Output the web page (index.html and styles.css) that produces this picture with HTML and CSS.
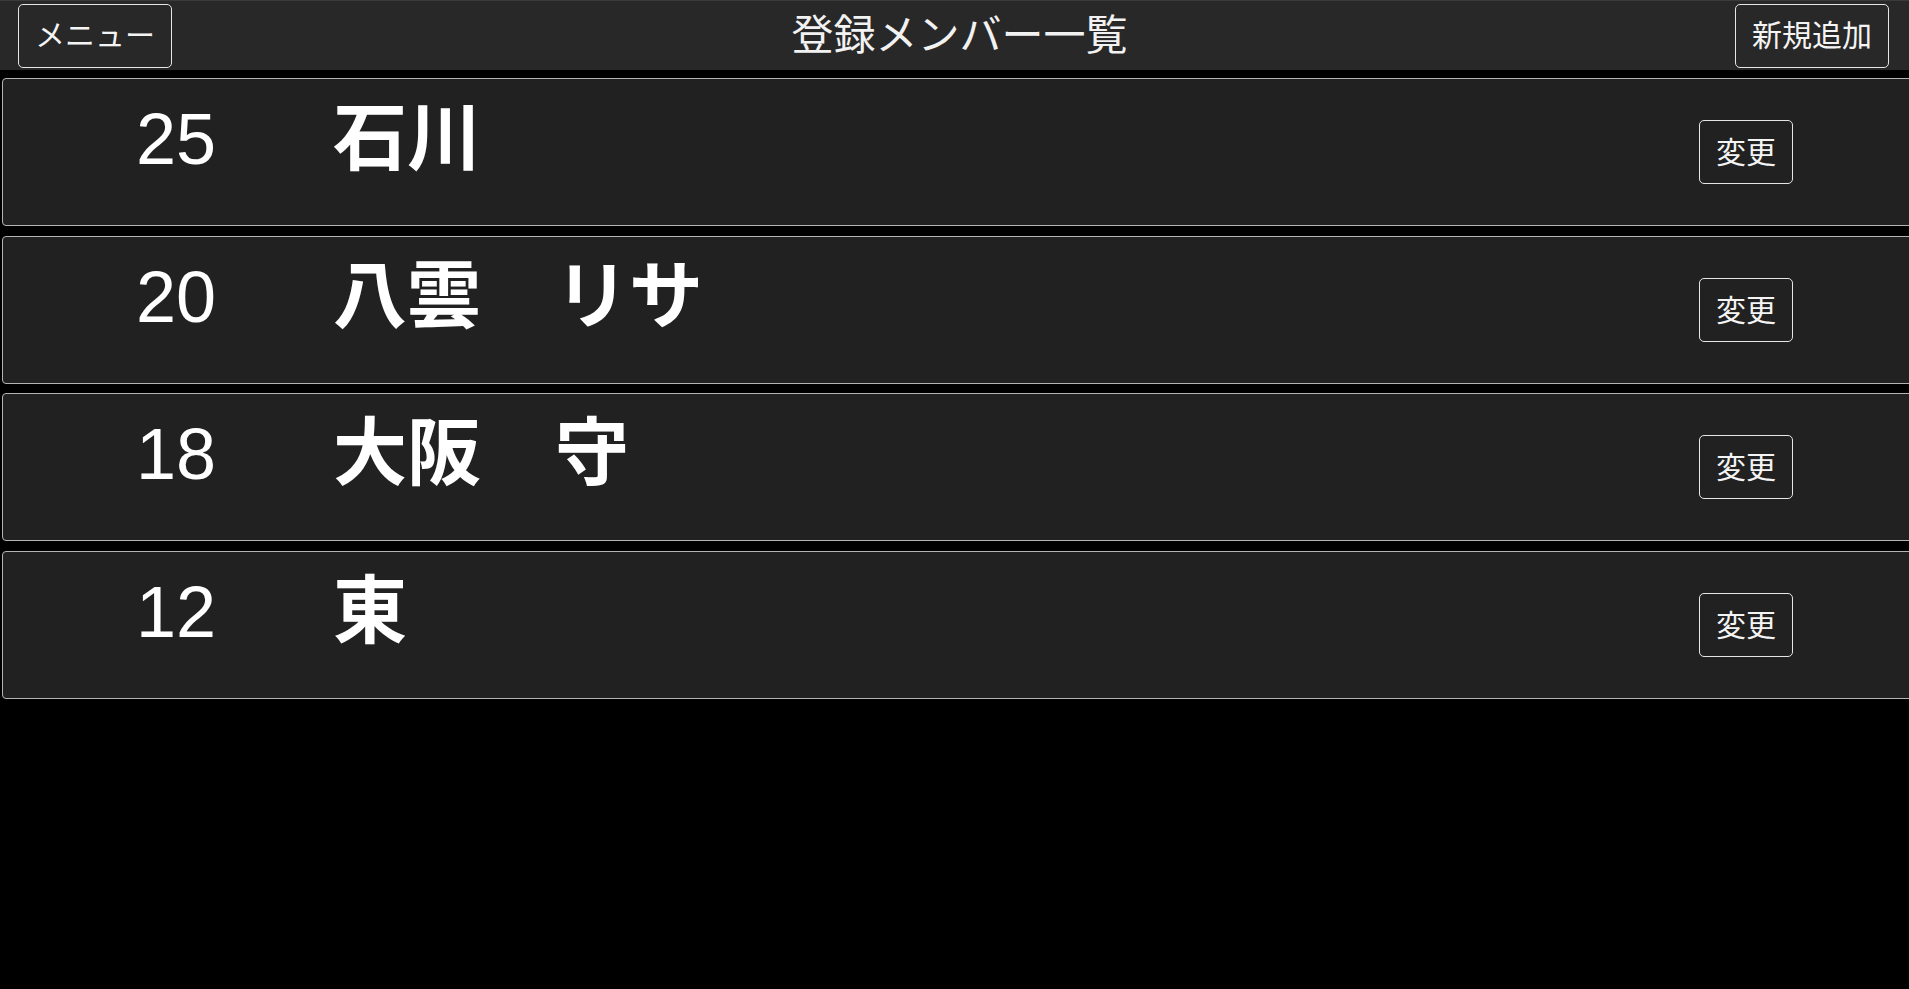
FILE: index.html
```html
<!DOCTYPE html>
<html lang="ja">
<head>
<meta charset="utf-8">
<title>登録メンバー一覧</title>
<link rel="stylesheet" href="styles.css">
</head>
<body>
<header class="topbar">
  <button class="btn btn-header">メニュー</button>
  <h1 class="title">登録メンバー一覧</h1>
  <button class="btn btn-header">新規追加</button>
</header>
<main class="list">
  <div class="row">
    <div class="info"><span class="num">25</span><span class="name">石川</span></div>
    <button class="btn btn-edit">変更</button>
  </div>
  <div class="row">
    <div class="info"><span class="num">20</span><span class="name">八雲　リサ</span></div>
    <button class="btn btn-edit">変更</button>
  </div>
  <div class="row">
    <div class="info"><span class="num">18</span><span class="name">大阪　守</span></div>
    <button class="btn btn-edit">変更</button>
  </div>
  <div class="row">
    <div class="info"><span class="num">12</span><span class="name">東</span></div>
    <button class="btn btn-edit">変更</button>
  </div>
</main>
</body>
</html>
```
FILE: styles.css
```css
html, body {
  margin: 0;
  padding: 0;
  background: #000;
  overflow: hidden;
}
body {
  width: 1909px;
  height: 989px;
  font-family: "Noto Sans CJK JP", "Liberation Sans", sans-serif;
  color: #fff;
}
.topbar {
  box-sizing: border-box;
  height: 70px;
  background: #282828;
  border-top: 1px solid #3a3a3a;
  display: grid;
  grid-template-columns: 1fr auto 1fr;
  align-items: center;
  padding: 0 20px 0 18px;
}
.topbar .btn-header:first-child { justify-self: start; }
.topbar .btn-header:last-child { justify-self: end; }
.title {
  margin: 0;
  padding: 0 0 8px 12px;
  font-size: 42px;
  font-weight: 400;
  line-height: 1;
  color: #f2f2f2;
}
.btn {
  font-family: "Noto Sans CJK JP", "Liberation Sans", sans-serif;
  background: transparent;
  color: #f4f4f4;
  border: 1px solid #e6e6e6;
  border-radius: 5px;
  font-size: 30px;
  line-height: 1;
  cursor: pointer;
}
.btn-header {
  height: 64px;
  padding: 0 16px 6px;
}
.list {
  padding: 8px 0 0 2px;
  margin-right: -24px;
  display: flex;
  flex-direction: column;
  gap: 9.5px;
}
.row {
  box-sizing: border-box;
  height: 148px;
  background: #212121;
  border: 1px solid #b4b4b4;
  border-radius: 4px;
  display: flex;
  align-items: center;
}
.info {
  align-self: flex-start;
  flex: 1;
  display: flex;
  align-items: baseline;
  padding-top: 16px;
}
.num {
  width: 213px;
  text-align: right;
  font-family: "Liberation Sans", Arial, sans-serif;
  font-size: 72px;
  line-height: 1;
}
.name {
  margin-left: 117px;
  font-size: 74px;
  font-weight: 700;
  line-height: 1;
}
.btn-edit {
  height: 64px;
  padding: 0 16px 4px;
  margin-right: 139px;
}
```
